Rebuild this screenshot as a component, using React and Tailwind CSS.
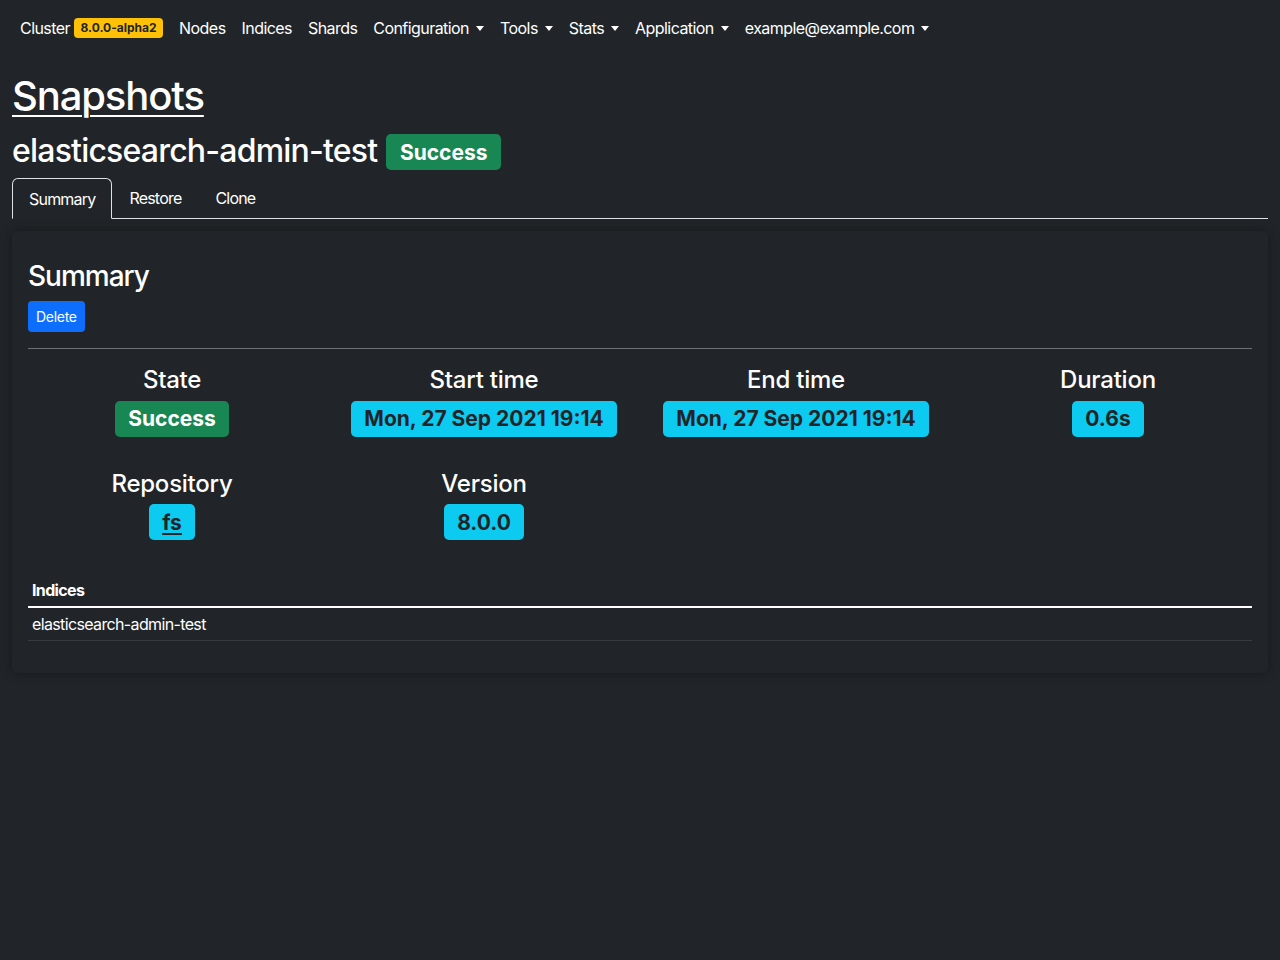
function Caret() {
  return (
    <span className="ml-[7px] inline-block w-0 h-0 border-x-[4.5px] border-x-transparent border-t-[5px] border-t-white align-[3px]" />
  );
}

function NavItem({ label, dropdown }) {
  return (
    <a href="#" className="px-2 py-2 text-white whitespace-nowrap">
      {label}
      {dropdown && <Caret />}
    </a>
  );
}

function Field({ label, children }) {
  return (
    <div className="flex flex-col items-center px-3">
      <h4 className="text-[24px] font-medium leading-[1.2] tracking-[-0.01em] mb-[6px]">{label}</h4>
      {children}
    </div>
  );
}

function Badge({ color = "info", children }) {
  const cls =
    color === "success"
      ? "bg-[#198754] text-white"
      : "bg-[#0dcaf0] text-[#212529]";
  return (
    <span
      className={`${cls} inline-block text-[21px] font-bold leading-none px-[13.6px] py-[7.4px] rounded-[5px] whitespace-nowrap`}
    >
      {children}
    </span>
  );
}

export default function App() {
  return (
    <div
      className="min-h-screen bg-[#212529] text-[#dee2e6]"
      style={{ fontFamily: "Inter, 'Liberation Sans', sans-serif" }}
    >
      {/* Navbar */}
      <nav className="h-14 px-3 flex items-center text-base tracking-[-0.035em]">
        <a href="#" className="px-2 py-2 text-white flex items-center">
          Cluster
          <span className="ml-[4px] bg-[#ffc107] text-[#212529] text-[12px] font-bold leading-none tracking-normal px-[6.5px] py-[4px] rounded-[4px]">
            8.0.0-alpha2
          </span>
        </a>
        <NavItem label="Nodes" />
        <NavItem label="Indices" />
        <NavItem label="Shards" />
        <NavItem label="Configuration" dropdown />
        <NavItem label="Tools" dropdown />
        <NavItem label="Stats" dropdown />
        <NavItem label="Application" dropdown />
        <NavItem label="example@example.com" dropdown />
      </nav>

      <main className="px-3 pt-4">
        <h1 className="text-[40px] font-medium leading-[1.2] tracking-[-0.028em] mb-2">
          <a href="#" className="text-white underline decoration-2 underline-offset-[5px]">
            Snapshots
          </a>
        </h1>
        <h2 className="mt-3 mb-2 text-[32px] font-medium leading-[1.2] tracking-[-0.025em] text-white flex items-center">
          elasticsearch-admin-test
          <span className="ml-[9px] mt-[2px] bg-[#198754] text-white text-[21px] font-bold leading-none tracking-normal px-[13.6px] py-[7.4px] rounded-[5px]">
            Success
          </span>
        </h2>

        {/* Tabs */}
        <div className="flex border-b border-[#dee2e6] tracking-[-0.05em]">
          <button className="px-4 py-[7px] text-white border border-[#dee2e6] border-b-[#212529] rounded-t-[6px] -mb-px leading-6">
            Summary
          </button>
          <button className="px-4 py-[7px] text-white border border-transparent leading-6">
            Restore
          </button>
          <button className="px-4 py-[7px] text-white border border-transparent leading-6">
            Clone
          </button>
        </div>

        {/* Card */}
        <section className="mt-3 rounded-[6px] bg-[#212529] shadow-[0_0_12px_rgba(0,0,0,0.35)] p-4 text-white">
          <h3 className="text-[28px] font-medium leading-[1.2] tracking-[-0.036em] mt-[13px] mb-[7px]">
            Summary
          </h3>
          <button className="bg-[#0d6efd] text-white text-[14px] leading-[21px] tracking-[-0.02em] px-2 py-[5px] rounded-[4px]">
            Delete
          </button>
          <hr className="mt-4 mb-[17px] border-t border-[#6c6f73]" />

          <div className="grid grid-cols-4 gap-y-[33px] -mx-3">
            <Field label="State">
              <Badge color="success">Success</Badge>
            </Field>
            <Field label="Start time">
              <Badge>Mon, 27 Sep 2021 19:14</Badge>
            </Field>
            <Field label="End time">
              <Badge>Mon, 27 Sep 2021 19:14</Badge>
            </Field>
            <Field label="Duration">
              <Badge>0.6s</Badge>
            </Field>
            <Field label="Repository">
              <Badge>
                <a href="#" className="underline underline-offset-[3px] decoration-2">fs</a>
              </Badge>
            </Field>
            <Field label="Version">
              <Badge>8.0.0</Badge>
            </Field>
          </div>

          <table className="w-full text-left mt-[34px] mb-4 tracking-[-0.04em]">
            <thead>
              <tr className="border-b-2 border-white">
                <th className="px-1 py-1 font-bold leading-6">Indices</th>
              </tr>
            </thead>
            <tbody>
              <tr className="border-b border-[#373b3e]">
                <td className="px-1 py-1 leading-6">elasticsearch-admin-test</td>
              </tr>
            </tbody>
          </table>
        </section>
      </main>
    </div>
  );
}
